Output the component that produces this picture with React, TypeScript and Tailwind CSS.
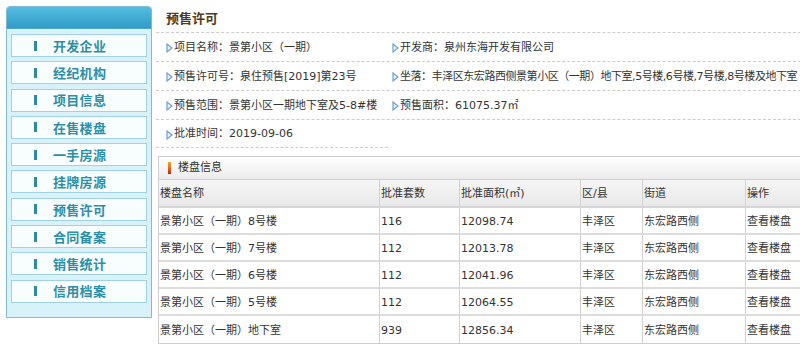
import React from "react";

const font = { fontFamily: '"DejaVu Sans", "Noto Sans CJK SC", sans-serif' };

const navItems = ["开发企业", "经纪机构", "项目信息", "在售楼盘", "一手房源", "挂牌房源", "预售许可", "合同备案", "销售统计", "信用档案"];

const rows = [
  ["景第小区（一期）8号楼", "116", "12098.74", "丰泽区", "东宏路西侧", "查看楼盘"],
  ["景第小区（一期）7号楼", "112", "12013.78", "丰泽区", "东宏路西侧", "查看楼盘"],
  ["景第小区（一期）6号楼", "112", "12041.96", "丰泽区", "东宏路西侧", "查看楼盘"],
  ["景第小区（一期）5号楼", "112", "12064.55", "丰泽区", "东宏路西侧", "查看楼盘"],
  ["景第小区（一期）地下室", "939", "12856.34", "丰泽区", "东宏路西侧", "查看楼盘"],
];

const colW = ["w-[221px]", "w-[80px]", "w-[121px]", "w-[62px]", "w-[103px]", "w-[70px]"];

function Tri() {
  return (
    <svg width="7" height="10" viewBox="0 0 7 10" className="shrink-0 mr-[1px]">
      <polygon points="1,1 6,5 1,9" fill="#eaf3fc" stroke="#6e9fd6" strokeWidth="1.2" />
    </svg>
  );
}

function Info({ label, value, wide, tight }: { label: string; value: React.ReactNode; wide?: boolean; tight?: boolean }) {
  return (
    <div className={`flex items-center ${wide ? "" : "w-[226px]"} pl-[10px] pt-[2px] whitespace-nowrap ${tight ? "tracking-[-0.45px]" : ""}`}>
      <Tri />
      <span>{label}：</span>
      <span>{value}</span>
    </div>
  );
}

export default function App() {
  return (
    <div className="w-[800px] h-[350px] bg-white flex overflow-hidden text-[11px] text-[#333]" style={font}>
      <aside className="ml-[6px] mt-[6px] w-[146px] h-[312px] shrink-0 border border-[#7dbcd2] bg-[#d9f1f8] rounded-t-[4px] flex flex-col">
        <div className="h-[22px] bg-gradient-to-b from-[#55bde0] to-[#2f9bc6] rounded-t-[3px] border-b border-[#4aa9cc]" />
        <div className="flex flex-col gap-[4.3px] px-[4px] pt-[5px]">
          {navItems.map((t) => (
            <div key={t} className="h-[23px] border border-[#9fd2e2] bg-[#f8fdfe] flex items-center">
              <span className="ml-[22px] w-[3px] h-[10px] bg-[#2f8c9e]" />
              <span className="ml-[16px] text-[13px] font-bold text-[#2d8fa6] tracking-[0.3px]" style={{ fontFamily: '"Noto Sans CJK SC", sans-serif' }}>
                {t}
              </span>
            </div>
          ))}
        </div>
      </aside>

      <main className="ml-[4px] flex-1 flex flex-col">
        <div className="h-[33px] flex items-center pl-[10px] pt-[3px] border-b border-dashed border-[#ccc]">
          <span className="text-[13px] font-bold text-[#4e3c1e]" style={{ fontFamily: '"Noto Sans CJK SC", sans-serif' }}>预售许可</span>
        </div>
        <div className="h-[29px] flex items-center border-b border-dashed border-[#ccc]">
          <Info label="项目名称" value="景第小区（一期）" />
          <Info label="开发商" value="泉州东海开发有限公司" wide />
        </div>
        <div className="h-[29px] flex items-center border-b border-dashed border-[#ccc]">
          <Info label="预售许可号" value="泉住预售[2019]第23号" />
          <Info label="坐落" value="丰泽区东宏路西侧景第小区（一期）地下室,5号楼,6号楼,7号楼,8号楼及地下室" wide tight />
        </div>
        <div className="h-[29px] flex items-center border-b border-dashed border-[#ccc]">
          <Info label="预售范围" value="景第小区一期地下室及5-8#楼" />
          <Info label="预售面积" value={<>61075.37㎡</>} wide />
        </div>
        <div className="h-[28px] w-[232px] flex items-center border-b border-dashed border-[#ccc]">
          <Info label="批准时间" value="2019-09-06" />
        </div>

        <div className="mt-[8px] ml-[2px] border border-[#cfcfcf] border-r-0 flex flex-col">
          <div className="h-[23px] flex items-center bg-gradient-to-b from-[#ffffff] to-[#ececec] border-b border-[#cfcfcf]">
            <span className="ml-[9px] w-[3px] h-[12px] bg-gradient-to-b from-[#f5a623] to-[#d0021b]" />
            <span className="ml-[7px] pt-[1px]">楼盘信息</span>
          </div>
          <div className="flex h-[28px] bg-gradient-to-b from-[#f6f6f6] to-[#e9e9e9] border-b-2 border-[#d6d6d6]">
            {["楼盘名称", "批准套数", "批准面积(㎡)", "区/县", "街道", "操作"].map((h, i) => (
              <div key={h} className={`${colW[i]} shrink-0 flex items-center pl-[1px] pt-[3px] ${i < 5 ? "border-r border-[#d2d2d2]" : ""}`}>
                {h}
              </div>
            ))}
          </div>
          {rows.map((r, ri) => (
            <div key={ri} className={`flex h-[27px] bg-white ${ri < rows.length - 1 ? "border-b-2 border-[#dcdcdc]" : ""}`}>
              {r.map((c, i) => (
                <div key={i} className={`${colW[i]} shrink-0 flex items-center pl-[1px] pt-[3px] ${i < 5 ? "border-r border-[#d2d2d2]" : ""}`}>
                  {c}
                </div>
              ))}
            </div>
          ))}
        </div>
      </main>
    </div>
  );
}
